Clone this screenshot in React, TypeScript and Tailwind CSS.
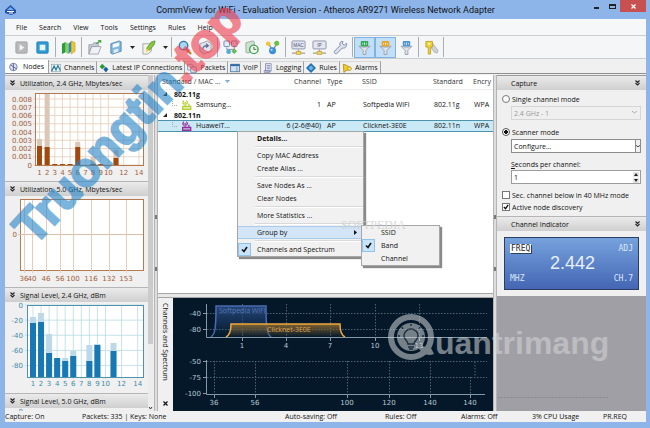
import React from "react";

const menus = ["File", "Search", "View", "Tools", "Settings", "Rules", "Help"];

const ticks24 = [1, 2, 3, 4, 5, 6, 7, 8, 9, 10, 12, 14];

const Svg = ({ size = 15, children }: { size?: number; children: React.ReactNode }) => (
  <svg width={size} height={size} viewBox="0 0 16 16" fill="none" className="shrink-0">
    {children}
  </svg>
);

const Funnel = ({ color }: { color: string }) => (
  <Svg>
    <rect x="4" y="1" width="8" height="6" rx="1" fill={color} />
    <path d="M6 3v2M8 2.5v3M10 3v2" stroke="#fff" strokeWidth=".7" />
    <path d="M2 6.5c3 1.5 9 1.5 12 0L9.5 11v4.5h-3V11z" fill="#dfe3e8" stroke="#8a929c" strokeWidth=".8" />
  </Svg>
);

const Monitor = ({ label }: { label: string }) => (
  <Svg>
    <rect x="1" y="1" width="14" height="8.5" rx="1" fill="#e4e6f0" stroke="#8e93a8" />
    <text x="8" y="7" textAnchor="middle" fontSize="5" fill="#465078" fontFamily="Liberation Sans">
      {label}
    </text>
    <path d="M8 10v3M1 14h14" stroke="#a5a08a" strokeWidth="1.4" />
    <rect x="5.5" y="12" width="5" height="3.5" fill="#ecd35a" stroke="#b79b2c" strokeWidth=".6" />
  </Svg>
);

const Separator = () => <span className="h-5 w-px shrink-0 bg-[#a9b0b4]" />;

const ToolButton = ({
  label,
  active,
  children,
}: {
  label: string;
  active?: boolean;
  children: React.ReactNode;
}) => (
  <button
    aria-label={label}
    className={
      active
        ? "flex h-[21px] w-[21px] items-center justify-center border border-[#7fb4e2] bg-[#c2dffa]"
        : "flex h-[21px] w-[21px] items-center justify-center"
    }
  >
    {children}
  </button>
);

const DropArrow = ({ label }: { label: string }) => (
  <button aria-label={label} className="flex w-3 justify-center">
    <svg width="5" height="3" viewBox="0 0 5 3">
      <path d="M0 0h5L2.500 3z" fill="#222" />
    </svg>
  </button>
);

const Toolbar = () => (
  <div className="flex h-[23px] items-center border-b border-[#c9cdd0] bg-[#f4f6f8] pl-[6px]">
    <ToolButton label="Start capture">
      <Svg>
        <rect x="2" y="2" width="12" height="12" rx="1" fill="#b9b9b9" stroke="#a2a2a2" />
        <path d="M6 4.500l5 3.500-5 3.500z" fill="#f4f4f4" />
      </Svg>
    </ToolButton>
    <ToolButton label="Stop capture">
      <Svg>
        <rect x="2" y="2" width="12" height="12" rx="1" fill="#2f9bd8" stroke="#1f7fb8" />
        <rect x="5" y="5" width="6" height="6" fill="#eaf6fd" />
      </Svg>
    </ToolButton>
    <span className="w-[2px]" />
    <Separator />
    <span className="w-[2px]" />
    <ToolButton label="Open log">
      <Svg>
        <path d="M1 4l4-2v11l-4 2z" fill="#2f9a3c" />
        <path d="M5 2l3 2v11l-3-2z" fill="#83d05c" />
        <path d="M8 4l3-3v11l-3 3z" fill="#2c86b8" />
        <path d="M11 1l4 2v9l-4 3z" fill="#ecc62f" stroke="#b9941a" strokeWidth=".6" />
      </Svg>
    </ToolButton>
    <span className="w-[2px]" />
    <Separator />
    <span className="w-[2px]" />
    <ToolButton label="Open">
      <Svg>
        <path d="M2 5h4l1-2h5v4H5l-3 8z" fill="#c8ccd6" stroke="#8d93a1" strokeWidth=".8" />
        <path d="M5 7h10l-3 8H2z" fill="#f0f1f5" stroke="#8d93a1" strokeWidth=".8" />
        <path d="M10 4l4-3M12 .5h2.500V3" stroke="#43a83f" strokeWidth="1.400" />
      </Svg>
    </ToolButton>
    <ToolButton label="Save">
      <Svg>
        <path d="M3 4l9-3 2 1v10l-9 3-2-1z" fill="#7fb6dc" stroke="#4d7c9f" strokeWidth=".8" />
        <path d="M5 4.500l7-2v4l-7 2z" fill="#f2f7fb" />
        <path d="M6 10.500l5-1.500v3.500L6 14z" fill="#dceaf4" />
      </Svg>
    </ToolButton>
    <DropArrow label="Save options" />
    <ToolButton label="Edit">
      <Svg>
        <path d="M2 4h9v8l-4 3H2z" fill="#f3f3ea" stroke="#8f958c" strokeWidth=".8" />
        <path d="M15 1l-4 1-5 7 3 2 5-6z" fill="#8cc63c" stroke="#4f8c2a" strokeWidth=".8" />
        <path d="M6 9l3 2-4 2z" fill="#f3cf3d" />
      </Svg>
    </ToolButton>
    <DropArrow label="Edit options" />
    <Separator />
    <span className="w-[2px]" />
    <ToolButton label="Find">
      <Svg>
        <circle cx="7" cy="6" r="4.500" fill="#a9d8f2" stroke="#3d78a8" strokeWidth="1.500" />
        <path d="M10 10l5 5" stroke="#cc7a2c" strokeWidth="2.400" />
      </Svg>
    </ToolButton>
    <ToolButton label="Go to packet">
      <Svg>
        <path d="M2 4l8-3 4 3v8l-8 3-4-3z" fill="#e1e4ea" stroke="#8a90a0" strokeWidth=".8" />
        <path d="M5 10c0-3 2-4 5-4M8.500 4L11 6 8.500 8" stroke="#5a6d94" strokeWidth="1.300" />
      </Svg>
    </ToolButton>
    <span className="w-px" />
    <Separator />
    <span className="w-[2px]" />
    <ToolButton label="Reconstruct session">
      <Svg>
        <rect x="1" y="1" width="6" height="6" rx="1" fill="#e5eaf5" stroke="#6a84b4" />
        <rect x="9" y="1" width="6" height="6" rx="1" fill="#e5eaf5" stroke="#6a84b4" />
        <path d="M4 8v2h8V8" stroke="#7c879e" />
        <circle cx="6" cy="12.500" r="2.500" fill="#54a8e0" />
        <path d="M9 12l3-3 3 3-3 3z" fill="#63bd53" />
      </Svg>
    </ToolButton>
    <ToolButton label="Scheduler">
      <Svg>
        <path d="M2 3l7-2 2 1v9l-7 3-2-1z" fill="#cfe2d2" stroke="#8aa08d" strokeWidth=".8" />
        <circle cx="10.500" cy="10" r="4.500" fill="#eaf7ea" stroke="#46a552" strokeWidth="1.500" />
        <path d="M10.500 7.500V10H13" stroke="#47644a" />
      </Svg>
    </ToolButton>
    <ToolButton label="Node reassociation">
      <Svg>
        <path d="M4 4l4 7 5-7" stroke="#6f86a4" strokeWidth="1.300" />
        <circle cx="3.500" cy="4" r="2.500" fill="#f0c631" />
        <circle cx="12.500" cy="3.500" r="2.700" fill="#6fbf45" />
        <circle cx="8" cy="11.500" r="3.700" fill="#3b8fd6" />
        <circle cx="7" cy="10.500" r="1.200" fill="#b7dcf6" />
      </Svg>
    </ToolButton>
    <span className="w-[2px]" />
    <Separator />
    <span className="w-[2px]" />
    <ToolButton label="MAC aliases">
      <Monitor label="MAC" />
    </ToolButton>
    <ToolButton label="IP aliases">
      <Monitor label="IP" />
    </ToolButton>
    <ToolButton label="Options">
      <Svg>
        <path
          d="M14.500 3.500l-2.500 2-2-1.500.5-2.500C8 1 6.500 3.500 7.500 6L1.500 12c-.8 1.500.8 3.200 2.500 2.500L10 8.500c3 .8 5-1.500 4.500-5z"
          fill="#dfe2ec"
          stroke="#7f86a6"
        />
      </Svg>
    </ToolButton>
    <span className="w-px" />
    <Separator />
    <span className="w-px" />
    <ToolButton label="Data frames" active>
      <Funnel color="#35a853" />
    </ToolButton>
    <ToolButton label="Management frames" active>
      <Funnel color="#e8a321" />
    </ToolButton>
    <ToolButton label="Control frames">
      <Funnel color="#4c93cf" />
    </ToolButton>
    <span className="w-px" />
    <Separator />
    <span className="w-[2px]" />
    <ToolButton label="Keys">
      <Svg>
        <path d="M8 2l7 9-1 3-3-1-5-7z" fill="#cdd0d4" stroke="#979ca3" strokeWidth=".6" />
        <path d="M2 1.500h7v6H7V15H4.500V7.500H2z" fill="#f3d531" stroke="#b6941c" strokeWidth=".8" />
        <circle cx="5.500" cy="4" r="1" fill="#fff" />
      </Svg>
    </ToolButton>
    <span className="w-px" />
    <Separator />
  </div>
);

const tabs = [
  {
    name: "Nodes",
    icon: (
      <>
        <circle cx="7" cy="8" r="6" fill="#dfe3f2" stroke="#7a82ac" strokeWidth="1.500" />
        <path d="M7 2v12M3 5l9 6" stroke="#59629a" strokeWidth="1.500" />
      </>
    ),
  },
  {
    name: "Channels",
    icon: (
      <>
        <rect x="1" y="2" width="14" height="12" fill="#e3f3f6" stroke="#8b9bb0" />
        <path d="M1 13L5 5l3 6 3-7 4 8" stroke="#28758e" strokeWidth="1.800" />
      </>
    ),
  },
  {
    name: "Latest IP Connections",
    icon: (
      <>
        <path d="M5 1l5 5-5 4-4-4z" fill="#2b9a3e" />
        <path d="M11 6l4 4-4 5-4-5z" fill="#1b5fa6" />
      </>
    ),
  },
  {
    name: "Packets",
    icon: (
      <>
        <path d="M1 2h7l2 2v7H1z" fill="#f0f3fa" stroke="#7086b0" strokeWidth="1.300" />
        <path d="M6 6h6l3 2v7H6z" fill="#dbe8f8" stroke="#7086b0" strokeWidth="1.300" />
      </>
    ),
  },
  {
    name: "VoIP",
    icon: (
      <>
        <rect x="1" y="2" width="14" height="12" fill="#cfe3f5" stroke="#4a6d94" strokeWidth="1.300" />
        <path d="M1 3.500h14" stroke="#2e67a5" strokeWidth="3" />
        <path d="M11 6v8" stroke="#4a6d94" />
      </>
    ),
  },
  {
    name: "Logging",
    icon: (
      <>
        <path d="M4 1h9v12H4z" fill="#e7ebf6" stroke="#7b86ad" strokeWidth="1.300" />
        <path d="M2 15h9v-3H2zM6 4h5M6 6.500h5M6 9h5" stroke="#7b86ad" strokeWidth="1.300" />
      </>
    ),
  },
  {
    name: "Rules",
    icon: (
      <>
        <path d="M8 0l8 8-8 8-8-8z" fill="#2473b8" />
        <path d="M8 4l4 4-4 4-4-4z" fill="#6fb8e8" />
      </>
    ),
  },
  {
    name: "Alarms",
    icon: (
      <>
        <path d="M2 2l4 1 7 4 1 3-7 2-4 3z" fill="#f1cb25" stroke="#a9861a" strokeWidth="1.200" />
        <circle cx="12" cy="9" r="3" fill="#f7e06c" stroke="#a9861a" />
      </>
    ),
  },
];

const Tabs = () => (
  <div role="tablist" className="flex h-[14px] items-end bg-[#f0f0f0]">
    {tabs.map((tab, i) => (
      <button
        key={tab.name}
        role="tab"
        aria-selected={i === 0}
        className={
          i === 0
            ? "flex h-[13px] items-center gap-1 border-r border-[#a0a0a0] bg-white px-1"
            : "flex h-3 items-center gap-[3px] border-t border-r border-t-[#d8d8d8] border-r-[#a0a0a0] px-[2px]"
        }
      >
        <Svg size={10}>{tab.icon}</Svg>
        {tab.name}
      </button>
    ))}
  </div>
);

const Chevrons = () => (
  <svg width="5" height="6" viewBox="0 0 5 6" fill="none" stroke="#222">
    <path d="M.5.5l2 2 2-2M.5 3l2 2 2-2" strokeWidth="1.100" />
  </svg>
);

const PanelHeader = ({ title }: { title: string }) => (
  <button className="flex h-[15px] w-full shrink-0 items-center gap-[5px] border-t border-[#b5b5b5] bg-linear-to-b from-[#ebebeb] to-[#cfcfcf] pl-[5px]">
    <Chevrons />
    {title}
  </button>
);

const utilBars = [
  { ch: 1, top: 56, peak: 49 },
  { ch: 2, top: 57, peak: 3 },
  { ch: 3, top: 74, peak: 74 },
  { ch: 4, top: 74, peak: 74 },
  { ch: 5, top: 74, peak: 74 },
  { ch: 6, top: 57, peak: 52 },
  { ch: 8, top: 74, peak: 67 },
  { ch: 9, top: 74, peak: 74 },
  { ch: 11, top: 68, peak: 60 },
];

const utilX = (ch: number) => 34.5 + (ch - 1) * 7.65;

const Utilization24 = () => (
  <svg width="143" height="91" className="shrink-0" fontFamily="DejaVu Sans" fontSize="7" fill="#a2603a">
    <rect x="30" y="3" width="109" height="72" fill="#fff" />
    {[0, 1, 2, 3, 4, 5, 6, 7, 8].map((v) => (
      <g key={v}>
        <path d={`M28 ${75 - v * 8.25}H139`} stroke="#e6cdb9" strokeWidth=".8" />
        <text x="27" y={77.5 - v * 8.25} textAnchor="end">
          {v === 0 ? "0" : `0.00${v}`}
        </text>
      </g>
    ))}
    {ticks24.map((t) => (
      <g key={t}>
        <path d={`M${utilX(t)} 3V77`} stroke="#e6cdb9" strokeWidth=".8" />
        <text x={utilX(t)} y="85" textAnchor="middle">
          {t}
        </text>
      </g>
    ))}
    {utilBars.map((b) => (
      <g key={b.ch}>
        <rect x={utilX(b.ch) - 2.5} y={b.peak} width="5" height={75 - b.peak} fill="#dcc6b5" />
        <rect x={utilX(b.ch) - 2.5} y={b.top} width="5" height={75 - b.top} fill="#a0480e" />
      </g>
    ))}
    <rect x="30.500" y="3.500" width="108" height="72" fill="none" stroke="#b57a50" />
  </svg>
);

const ticks50 = [
  [19, "36"],
  [27, "40"],
  [41, "46"],
  [55, "56"],
  [68, "100"],
  [86, "116"],
  [104, "132"],
  [121, "153"],
] as const;

const Utilization50 = () => (
  <svg width="143" height="91" className="shrink-0" fontFamily="DejaVu Sans" fontSize="7" fill="#a2603a">
    <rect x="15.500" y="3.500" width="123" height="71" fill="#fff" stroke="#b57a50" />
    <path d="M13 38.500H138" stroke="#dcc0a8" />
    {ticks50.map(([x, label]) => (
      <g key={label}>
        <path d={`M${x + 0.5} 4V77`} stroke="#e6cdb9" />
        <text x={x} y="85" textAnchor="middle">
          {label}
        </text>
      </g>
    ))}
    <text x="12" y="41" textAnchor="end">
      0
    </text>
  </svg>
);

const signalBars = [
  { ch: 1, top: 21, peak: 15 },
  { ch: 2, top: 20, peak: 11 },
  { ch: 3, top: 51, peak: 32 },
  { ch: 4, top: 56, peak: 56 },
  { ch: 5, top: 59, peak: 56 },
  { ch: 6, top: 54, peak: 49 },
  { ch: 8, top: 59, peak: 43 },
  { ch: 9, top: 43, peak: 42 },
  { ch: 11, top: 49, peak: 41 },
];

const signalX = (ch: number) => 28 + (ch - 1) * 8.05;

const Signal24 = () => (
  <svg width="143" height="91" className="shrink-0" fontFamily="DejaVu Sans" fontSize="7" fill="#3f8ba8">
    <rect x="22" y="3" width="117" height="72" fill="#fff" />
    {[0, -20, -40, -60, -80].map((v) => (
      <g key={v}>
        <path d={`M20 ${3 - v * 0.757}H139`} stroke="#b9dbe6" strokeWidth=".8" />
        <text x="18" y={5.5 - v * 0.757} textAnchor="end">
          {v}
        </text>
      </g>
    ))}
    {ticks24.map((t) => (
      <g key={t}>
        <path d={`M${signalX(t)} 3V77`} stroke="#b9dbe6" strokeWidth=".8" />
        <text x={signalX(t)} y="84" textAnchor="middle">
          {t}
        </text>
      </g>
    ))}
    {signalBars.map((b) => (
      <g key={b.ch}>
        <rect x={signalX(b.ch) - 3} y={b.peak} width="6" height={75 - b.peak} fill="#bcd9ea" />
        <rect x={signalX(b.ch) - 3} y={b.top} width="6" height={75 - b.top} fill="#1878b4" />
      </g>
    ))}
    <rect x="22.500" y="3.500" width="116" height="72" fill="none" stroke="#4b93b0" />
  </svg>
);

const Sidebar = () => (
  <aside className="flex w-[149px] shrink-0">
    <div className="flex w-[143px] flex-col overflow-hidden bg-[#f0f0f0]">
      <PanelHeader title="Utilization, 2.4 GHz, Mbytes/sec" />
      <Utilization24 />
      <PanelHeader title="Utilization, 5.0 GHz, Mbytes/sec" />
      <Utilization50 />
      <PanelHeader title="Signal Level, 2.4 GHz, dBm" />
      <Signal24 />
      <PanelHeader title="Signal Level, 5.0 GHz, dBm" />
      <svg width="143" height="8" className="shrink-0" fontFamily="DejaVu Sans" fontSize="7" fill="#3f8ba8">
        <path d="M20 3.500H138.500V8M22.500 3V8" fill="none" stroke="#4b93b0" />
        <text x="18" y="6" textAnchor="end">
          0
        </text>
      </svg>
    </div>
    <div className="flex w-[5px] flex-col justify-between bg-[#ececec]">
      <div className="h-4/5 bg-[#cbcbcb]" />
      <svg width="5" height="5" viewBox="0 0 5 5" fill="none">
        <path d="M1 1l1.500 2L4 1" stroke="#333" />
      </svg>
    </div>
  </aside>
);

const Splitter = () => (
  <div className="flex w-[4px] shrink-0 flex-col items-center justify-center gap-12 border-x border-[#b4b4b4] bg-[#dedede]">
    <span className="h-1 w-[2px] bg-[#777]" />
    <span className="h-1 w-[2px] bg-[#777]" />
  </div>
);

const Antenna = ({ color }: { color: string }) => (
  <Svg size={10}>
    <path d="M1 10h13v5H1z" fill={color} fillOpacity=".4" />
    <path d="M1 10h13v5H1zM5 10V3M3 1c-2 2-2 4 0 6M7 1c2 2 2 4 0 6M11 10V6" stroke={color} strokeWidth="2" />
  </Svg>
);

const nodes = [
  {
    band: "802.11g",
    name: "Samsung...",
    color: "#b5cf2c",
    channel: "1",
    ssid: "Softpedia WiFi",
    row: "h-[11px] border-y border-transparent",
  },
  {
    band: "802.11n",
    name: "HuaweiT...",
    color: "#9b2a9b",
    channel: "6 (2-6@40)",
    ssid: "Clicknet-3E0E",
    row: "h-[11px] border-y border-[#4d93ae] bg-[#c9e9f7]",
  },
];

const NodeTable = () => (
  <table className="w-full table-fixed border-collapse text-left whitespace-nowrap">
    <thead>
      <tr className="h-[14px] border-b border-[#ededed] text-[#333]">
        <th className="w-[100px] pl-1 font-normal">
          <span className="flex items-center gap-1">
            Standard / MAC ...
            <svg width="5" height="3" viewBox="0 0 5 3">
              <path d="M0 0h5L2.500 3z" fill="#7aaed0" />
            </svg>
          </span>
        </th>
        <th className="w-[65px] pr-[2px] text-right font-normal">Channel</th>
        <th className="w-[38px] pl-1 font-normal">Type</th>
        <th className="w-[70px] pl-px font-normal">SSID</th>
        <th className="w-[42px] pl-[2px] font-normal">Standard</th>
        <th className="overflow-hidden font-normal">Encry</th>
      </tr>
    </thead>
    {nodes.map((node) => (
      <tbody key={node.band}>
        <tr className="h-[10px]">
          <td colSpan={6} className="pl-[5px]">
            <span className="flex items-center gap-[7px] font-bold">
              <svg width="4" height="4" viewBox="0 0 4 4">
                <path d="M4 0v4H0z" fill="#222" />
              </svg>
              {node.band}
            </span>
          </td>
        </tr>
        <tr className={node.row}>
          <td className="pl-[14px]">
            <span className="flex items-center gap-1">
              <svg width="6" height="8" viewBox="0 0 6 8" fill="none">
                <path d="M.5 0v4.500H6" stroke="#aaa" strokeDasharray="1 1" />
              </svg>
              <Antenna color={node.color} />
              {node.name}
            </span>
          </td>
          <td className="pr-[2px] text-right">{node.channel}</td>
          <td className="pl-1">AP</td>
          <td className="pl-[2px]">{node.ssid}</td>
          <td className="pl-[3px]">{node.band}</td>
          <td className="overflow-hidden pl-px">WPA</td>
        </tr>
      </tbody>
    ))}
  </table>
);

const Check = () => (
  <svg width="7" height="7" viewBox="0 0 7 7" fill="none">
    <path d="M1 3.500l2 2L6 1" stroke="#111" strokeWidth="1.600" />
  </svg>
);

const MenuItem = ({
  label,
  checked,
  bold,
  submenu,
}: {
  label: string;
  checked?: boolean;
  bold?: boolean;
  submenu?: boolean;
}) => (
  <button
    role="menuitem"
    className={
      submenu
        ? "flex h-[13px] w-full items-center border-y border-[#a8cdec] bg-[#d3e5f6] text-left"
        : "flex h-[13px] w-full items-center text-left"
    }
  >
    <span
      className={
        checked
          ? "flex h-[13px] w-[13px] items-center justify-center border border-[#8fc4e8] bg-[#c9e4f8]"
          : "w-[13px]"
      }
    >
      {checked && <Check />}
    </span>
    <span className={bold ? "flex-1 pl-[6px] font-bold" : "flex-1 pl-[6px]"}>{label}</span>
    {submenu && (
      <svg width="3" height="5" viewBox="0 0 3 5" className="mr-[6px]">
        <path d="M0 0l3 2.500L0 5z" fill="#111" />
      </svg>
    )}
  </button>
);

const MenuLine = () => <div role="separator" className="my-[1px] ml-[17px] h-[2px] border-t border-[#d9d9d9] bg-white" />;

const ContextMenu = () => (
  <div
    role="menu"
    className="absolute top-[56px] left-[79px] w-[127px] border border-[#a6a6a6] bg-[#f1f1f1] shadow-[2px_2px_1px_#8a8a8a]"
  >
    <MenuItem label="Details..." bold />
    <MenuLine />
    <MenuItem label="Copy MAC Address" />
    <MenuItem label="Create Alias ..." />
    <MenuLine />
    <MenuItem label="Save Nodes As ..." />
    <MenuItem label="Clear Nodes" />
    <MenuLine />
    <MenuItem label="More Statistics ..." />
    <MenuLine />
    <MenuItem label="Group by" submenu />
    <MenuLine />
    <MenuItem label="Channels and Spectrum" checked />
    <div
      role="menu"
      className="absolute top-[93px] left-[123px] w-[79px] border border-[#a6a6a6] bg-[#f1f1f1] shadow-[2px_2px_1px_#8a8a8a]"
    >
      <MenuItem label="SSID" />
      <MenuItem label="Band" checked />
      <MenuItem label="Channel" />
    </div>
  </div>
);

const Spectrum = () => (
  <svg width="320" height="113" fontFamily="DejaVu Sans" fontSize="7" fill="#b8c8d4">
    <g fill="none" stroke="#4a6472" strokeDasharray="1.500 1.500">
      <path d="M34 15.500H314M34 31.500H314M34 63.500H314M34 79.500H314" />
      <path d="M69.500 6V39M113.500 6V39M157.500 6V39M202.500 6V39M246.500 6V39" />
      <path d="M41.500 63V96M82.500 63V96M174.500 63V96M216.500 63V96M257.500 63V96M297.500 79V96M302 64V79" />
    </g>
    <defs>
      <linearGradient id="blueFill" x1="0" y1="0" x2="0" y2="1">
        <stop offset="0" stopColor="#234577" />
        <stop offset="1" stopColor="#234577" stopOpacity="0" />
      </linearGradient>
      <linearGradient id="orangeFill" x1="0" y1="0" x2="0" y2="1">
        <stop offset="0" stopColor="#7d6130" />
        <stop offset="1" stopColor="#7d6130" stopOpacity="0" />
      </linearGradient>
    </defs>
    <path d="M38 39c4-3 5-8 5-31h50c0 23 1 28 5 31" fill="url(#blueFill)" stroke="#4a6bb0" strokeWidth="1.500" />
    <path d="M53 39c4-2 5-6 5-13h109c0 7 1 11 5 13" fill="url(#orangeFill)" stroke="#f0a73c" strokeWidth="1.500" />
    <g fill="none" stroke="#8199a8">
      <path d="M33.500 6V39.500H314M30 15.500h4M30 31.500h4" />
      <path d="M69.500 39v4M113.500 39v4M157.500 39v4M202.500 39v4M246.500 39v4" />
      <path d="M33.500 62V96.500H312M30 63.500h4M30 79.500h4M30 95.500h4" />
      <path d="M41.500 96v4M82.500 96v4M174.500 96v4M216.500 96v4M257.500 96v4M297.500 96v4" />
    </g>
    <g textAnchor="end">
      <text x="28" y="18">-40</text>
      <text x="28" y="34">-80</text>
      <text x="28" y="66">-50</text>
      <text x="28" y="82">-75</text>
      <text x="28" y="98">-100</text>
    </g>
    <g textAnchor="middle">
      <text x="69" y="50">1</text>
      <text x="113" y="50">4</text>
      <text x="157" y="50">7</text>
      <text x="202" y="50">10</text>
      <text x="246" y="50">13</text>
      <text x="41" y="107">36</text>
      <text x="82" y="107">56</text>
      <text x="174" y="107">100</text>
      <text x="216" y="107">120</text>
      <text x="257" y="107">140</text>
      <text x="297" y="107">140</text>
    </g>
    <text x="46" y="15" fill="#5679bd" fontFamily="Open Sans">
      Softpedia WiFi
    </text>
    <text x="94" y="34" fill="#e0a44c" fontFamily="Open Sans">
      Clicknet-3E0E
    </text>
  </svg>
);

const CapturePanel = () => (
  <aside className="flex w-[149px] shrink-0 flex-col bg-[#a09fa5]">
    <div className="flex flex-col bg-[#f0f0f0] pb-[3px]">
      <button className="flex h-[15px] items-center justify-between border-t border-[#9a9a9a] bg-linear-to-b from-[#ebebeb] to-[#cfcfcf] pr-[6px] pl-[14px]">
        Capture
        <Chevrons />
      </button>
      <form className="flex flex-col px-[5px] pt-[3px]">
        <label className="flex h-3 items-center gap-[2px]">
          <input
            type="radio"
            name="mode"
            className="h-2 w-2 appearance-none rounded-full border border-[#777] bg-white"
          />
          Single channel mode
        </label>
        <div className="relative ml-[9px]">
          <select
            disabled
            aria-label="Single channel"
            className="mt-px h-[14px] w-full appearance-none border border-[#d5d5d5] bg-[#efefef] px-[2px] text-[#999]"
          >
            <option>2.4 GHz - 1</option>
          </select>
          <svg width="5" height="3" viewBox="0 0 5 3" fill="none" className="absolute top-[6px] right-1">
            <path d="M0 0l2.500 2L5 0" stroke="#aaa" />
          </svg>
        </div>
        <label className="mt-[6px] flex h-3 items-center gap-[2px]">
          <input
            type="radio"
            name="mode"
            defaultChecked
            className="h-2 w-2 appearance-none rounded-full border border-[#555] bg-[radial-gradient(circle,#111_40%,white_50%)]"
          />
          Scanner mode
        </label>
        <div className="relative ml-[9px]">
          <select
            aria-label="Scanner"
            className="mt-px h-[14px] w-full appearance-none border border-[#8c8c8c] bg-white px-[2px]"
          >
            <option>Configure...</option>
          </select>
          <span className="absolute top-px right-0 flex h-[14px] w-[6px] items-center justify-center border border-[#8c8c8c] bg-[#f0f0f0]">
            <svg width="4" height="3" viewBox="0 0 5 3" fill="none">
              <path d="M0 0l2.500 2L5 0" stroke="#222" />
            </svg>
          </span>
        </div>
        <label htmlFor="seconds" className="mt-[5px] ml-[9px] flex h-3 items-center">
          <span>
            <u>S</u>econds per channel:
          </span>
        </label>
        <div className="ml-[9px] flex h-[14px] items-center border border-[#9c9c9c] bg-white">
          <input id="seconds" defaultValue="1" className="h-full w-full px-[2px] outline-none" />
          <svg width="6" height="11" viewBox="0 0 6 11" className="mr-px shrink-0">
            <path d="M0 0h6v5H0zM0 6h6v5H0z" fill="#e4e4e4" />
            <path d="M1 4l2-3 2 3zM1 7h4L3 10z" fill="#222" />
          </svg>
        </div>
        <label className="mt-[5px] flex h-3 items-center gap-[2px]">
          <input type="checkbox" className="h-2 w-2 shrink-0 appearance-none border border-[#777] bg-white" />
          <span className="whitespace-nowrap">Sec. channel below in 40 MHz mode</span>
        </label>
        <label className="relative flex h-3 items-center gap-[2px]">
          <input
            type="checkbox"
            defaultChecked
            className="h-2 w-2 shrink-0 appearance-none border border-[#777] bg-white"
          />
          Active node discovery
          <svg width="6" height="6" viewBox="0 0 7 7" fill="none" className="absolute top-[3px] left-px">
            <path d="M1 3.500l2 2L6 1" stroke="#111" strokeWidth="1.600" />
          </svg>
        </label>
      </form>
    </div>
    <div className="bg-[#f0f0f0] pb-[6px]">
      <button className="flex h-[15px] w-full items-center justify-between border-t border-[#b5b5b5] bg-linear-to-b from-[#ebebeb] to-[#cfcfcf] pr-[6px] pl-[14px]">
        Channel Indicator
        <Chevrons />
      </button>
      <div className="mx-[7px] mt-[6px] flex h-[53px] items-stretch justify-between border border-[#2c3e66] bg-linear-to-b from-[#76a2dc] to-[#4566b4] px-[5px] py-[6px] font-['DejaVu_Sans_Mono','Liberation_Mono',monospace] text-[8px] leading-[9px] text-[#dbe7f8]">
        <div className="flex flex-col items-start justify-between">
          <span className="bg-white px-px text-[#222] shadow-[1px_1px_0_#33415f]">FREQ</span>
          <span>MHZ</span>
        </div>
        <span className="self-center font-['Liberation_Sans',sans-serif] text-[18px] text-[#e8f0fb]">2.442</span>
        <div className="flex flex-col items-end justify-between">
          <span>ADJ</span>
          <span>CH.7</span>
        </div>
      </div>
    </div>
  </aside>
);

const Watermarks = () => (
  <svg
    width="650"
    height="428"
    className="pointer-events-none absolute top-0 left-0"
    fontFamily="Liberation Sans"
    fontWeight="bold"
  >
    <g transform="translate(34 247) rotate(-47)" fontSize="48" strokeWidth="2" opacity=".6">
      <text>
        <tspan fill="#2584c8" stroke="#2584c8">Truongtin</tspan>
        <tspan fill="#ee3a4a" stroke="#ee3a4a">.top</tspan>
      </text>
    </g>
    <text x="341" y="229" fontFamily="Liberation Serif" fontWeight="normal" fontSize="12" fill="#cfcfcf" opacity=".8">
      SOFTPEDIA
    </text>
    <g opacity=".55" fill="#d3d5d8">
      <circle cx="411" cy="337" r="20" fill="none" stroke="#d3d5d8" strokeWidth="6" />
      <path d="M417 345c3 7 9 12 17 9l-3-6z" />
      <circle cx="411" cy="337" r="14" />
      <g fill="none" stroke="#33424e" strokeWidth="1.500">
        <path d="M408 344c0-3-4-4-4-8a7 7 0 0 1 14 0c0 4-4 5-4 8zM408 347h6M409 349h4" />
        <path d="M411 326v-2M403 329l-1-2M419 329l1-2M400 336h-2M422 336h2" />
      </g>
      <text x="435" y="354" fontSize="32">
        uantrimang
      </text>
    </g>
    <path d="M498 397.500H609" stroke="#8b8a91" strokeDasharray="2 1" />
  </svg>
);

const App: React.FC = () => {
  return (
    <div className="relative flex h-screen flex-col overflow-hidden bg-[#8db5ea] pr-1 pb-[6px] pl-[5px] font-['Open_Sans','Noto_Sans',sans-serif] text-[7px] leading-[9px] text-[#111]">
      <header className="relative flex h-[19px] shrink-0 items-center justify-center">
        <svg width="11" height="10" viewBox="0 0 11 10" className="absolute left-0">
          <path d="M5.500 0L11 5v3L6 10 0 8V5z" fill="#2152a8" />
          <path d="M5.500 2L9 5H2z" fill="#73aef0" />
          <path d="M2 6.500h7M4 8h4" stroke="#fff" />
        </svg>
        <h1 className="font-['Roboto',sans-serif] text-[9px] leading-3">
          CommView for WiFi - Evaluation Version - Atheros AR9271 Wireless Network Adapter
        </h1>
        <div className="absolute top-0 right-0 flex h-3">
          <button aria-label="Minimize" className="flex w-4 items-center justify-center pt-1">
            <span className="h-[2px] w-[5px] bg-[#222]" />
          </button>
          <button aria-label="Maximize" className="flex w-4 items-center justify-center">
            <span className="h-[5px] w-[7px] border border-t-2 border-[#222]" />
          </button>
          <button aria-label="Close" className="flex w-[26px] items-center justify-center bg-[#c75050]">
            <svg width="5" height="5" viewBox="0 0 5 5" stroke="#fff" strokeWidth="1.200">
              <path d="M.5.5l4 4M4.500.5l-4 4" />
            </svg>
          </button>
        </div>
      </header>
      <nav className="flex h-[17px] shrink-0 items-center gap-3 border-b border-[#c9cdd0] bg-[#f5f7f9] pl-[11px]">
        {menus.map((menu) => (
          <button key={menu}>{menu}</button>
        ))}
      </nav>
      <Toolbar />
      <Tabs />
      <main className="flex min-h-0 flex-1 border-t border-[#8f8f8f] bg-[#f0f0f0] pt-px">
        <Sidebar />
        <Splitter />
        <section className="flex min-w-0 flex-1 flex-col">
          <div className="relative min-h-0 flex-1 bg-white">
            <NodeTable />
            <ContextMenu />
          </div>
          <div className="h-[5px] shrink-0 border-y border-[#a5a5a5] bg-[#e8e8e8]" />
          <div className="flex h-[113px] shrink-0">
            <div className="flex w-[15px] shrink-0 flex-col items-center justify-between py-[5px]">
              <span className="[writing-mode:vertical-rl]">Channels and Spectrum</span>
              <button aria-label="Close panel">
                <svg width="5" height="5" viewBox="0 0 5 5" stroke="#111" strokeWidth="1.200">
                  <path d="M.5.5l4 4M4.500.5l-4 4" />
                </svg>
              </button>
            </div>
            <div className="min-w-0 flex-1 overflow-hidden bg-[#04182a]">
              <Spectrum />
            </div>
          </div>
        </section>
        <Splitter />
        <CapturePanel />
      </main>
      <footer className="flex h-[11px] shrink-0 items-center bg-[#f0f0f0] whitespace-nowrap">
        <span className="w-[77px]">Capture: On</span>
        <span className="w-[203px]">Packets: 335 | Keys: None</span>
        <span className="w-[100px]">Auto-saving: Off</span>
        <span className="w-[76px]">Rules: Off</span>
        <span className="w-[71px]">Alarms: Off</span>
        <span className="w-[71px]">3% CPU Usage</span>
        <span>PR.REQ</span>
      </footer>
      <Watermarks />
    </div>
  );
};

export default App;
